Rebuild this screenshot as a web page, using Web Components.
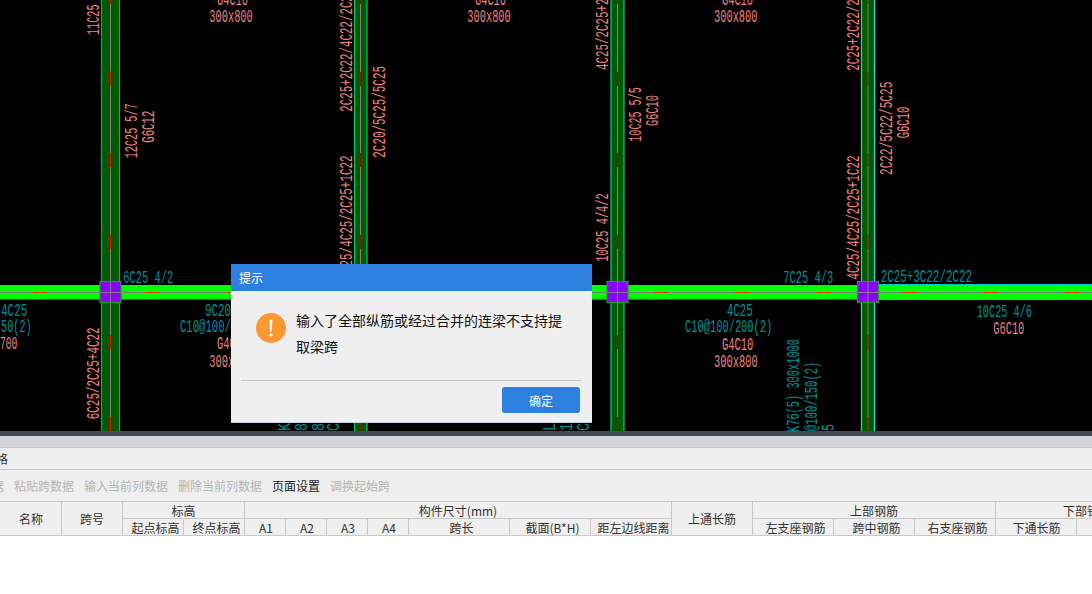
<!DOCTYPE html>
<html lang="zh">
<head>
<meta charset="utf-8">
<title>提示</title>
<style>
    html, body {
        margin: 0;
        height: 594px;
        overflow: hidden;
        background: #fff;
    }
    body {
        position: relative;
        display: flex;
        flex-direction: column;
        font-family: "Noto Sans CJK SC", "Liberation Sans", sans-serif;
        font-size: 12px;
        color: #333;
    }
</style>
</head>
<body>
<cad-canvas></cad-canvas>
<pane-sash></pane-sash>
<pane-head>格</pane-head>
<tool-strip>
    <tool-item class="clip" disabled>据</tool-item>
    <tool-item disabled>粘贴跨数据</tool-item>
    <tool-item disabled>输入当前列数据</tool-item>
    <tool-item disabled>删除当前列数据</tool-item>
    <tool-item>页面设置</tool-item>
    <tool-item disabled>调换起始跨</tool-item>
</tool-strip>
<span-table></span-table>
<hint-dialog heading="提示">
    <span slot="message">输入了全部纵筋或经过合并的连梁不支持提取梁跨</span>
    <span slot="action">确定</span>
</hint-dialog>

<script>
const RED = '#ee8080';
const TEAL = '#009096';

// text, x, y, length, colour, rotated. rotated labels: x is the baseline, y where the text starts
const LABELS = [
    ['G4C10', 217, 5, 31, RED],
    ['300x800', 209.3, 22, 43.5, RED],
    ['G4C10', 475, 5, 31, RED],
    ['300x800', 467.3, 22, 43.5, RED],
    ['G4C10', 722, 5, 31, RED],
    ['300x800', 714, 22, 43.5, RED],
    ['11C25 5/7', 99.3, 35, 55, RED, true],
    ['12C25 5/7', 136.7, 158.3, 55, RED, true],
    ['G6C12', 154, 142.7, 32, RED, true],
    ['2C25+2C22/4C22/2C22', 351.7, 111.7, 123, RED, true],
    ['4C25/4C25/2C25+1C22', 351.7, 279.5, 124, RED, true],
    ['2C20/5C25/5C25', 384.7, 157.7, 91.7, RED, true],
    ['4C25/2C25+2C25', 608.3, 70, 91, RED, true],
    ['10C25 4/4/2', 608, 261.7, 68.5, RED, true],
    ['10C25 5/5', 641.3, 141.7, 54.4, RED, true],
    ['G6C10', 658.3, 126, 31, RED, true],
    ['2C25+2C22/2C22', 858.7, 70.7, 91, RED, true],
    ['4C25/4C25/2C25+1C22', 858.7, 279.5, 124, RED, true],
    ['2C22/5C22/5C25', 892, 175, 93.3, RED, true],
    ['G6C10', 909, 138.3, 31.6, RED, true],
    ['6C25/2C25+4C22', 99.3, 419.3, 92, RED, true],
    ['6C25 4/2', 123.3, 282.7, 50, TEAL],
    ['4C25', 1, 316, 26.3, TEAL],
    ['50(2)', 1, 332.3, 30.7, TEAL],
    ['9C20', 205, 316, 26, TEAL],
    ['C10@100/', 180, 332.3, 51, TEAL],
    ['700', 0, 349.3, 17.3, RED],
    ['G4C10', 217, 349.3, 31, RED],
    ['300x800', 209.3, 366.7, 43.5, RED],
    ['4C25', 726.7, 316, 26, TEAL],
    ['C10@100/200(2)', 685, 332.3, 87.3, TEAL],
    ['G4C10', 722, 350, 31.3, RED],
    ['300x800', 714, 366.7, 43.7, RED],
    ['7C25 4/3', 783.3, 282.7, 50, TEAL],
    ['2C25+3C22/2C22', 880.7, 281.7, 91.3, TEAL],
    ['10C25 4/6', 976.7, 316.7, 55.3, TEAL],
    ['G6C10', 993.3, 334, 31, RED],
    ['K76(5) 300x1000', 799.3, 432, 93, TEAL, true],
    ['@100/150(2)', 816.7, 431, 69.3, TEAL, true],
    ['5', 834, 431, 7, TEAL, true],
    ['K', 290, 431, 8, TEAL, true],
    ['8', 307, 431, 8, TEAL, true],
    ['8', 324, 431, 8, TEAL, true],
    ['C', 339, 431, 8, TEAL, true],
    ['L', 555, 431, 8, TEAL, true],
    ['1', 572, 431, 8, TEAL, true],
    ['C', 589, 431, 8, TEAL, true]
];

const COLUMNS = [
    {left: 101.5, right: 119.5, mid: 110.5, edge: '#00a88c', dash: '#ff0000'},
    {left: 354.5, right: 367, mid: 360.5, edge: '#00c878', dash: '#8a1500'},
    {left: 611, right: 624, mid: 617.5, edge: '#14c4a4', dash: '#8a1500'},
    {left: 861.5, right: 874.5, mid: 868, edge: '#00e6e6', dash: '#6e2a00'}
];
const BEAM_DASHES = [33, 146, 228, 654, 735, 817, 903, 984, 1065];
const COLUMN_DASHES = [-10, 72, 153, 235, 335, 417];

class CadCanvas extends HTMLElement {
    connectedCallback() {
        const shadow = this.attachShadow({ mode: 'open' });
        let art = '';
        for (let i = 0; i < COLUMNS.length; i++) {
            const c = COLUMNS[i];
            art += `<rect x="${c.left}" y="0" width="${c.right - c.left}" height="431" fill="#005a00"/>`;
            art += `<path d="M${c.left} 0V431M${c.right} 0V431" stroke="${c.edge}" stroke-width="1.2"/>`;
            art += `<path d="M${c.mid} 0V431" stroke="#808080" stroke-width="1"/>`;
            for (let j = 0; j < COLUMN_DASHES.length; j++) {
                art += `<path d="M${c.mid} ${COLUMN_DASHES[j]}v14" stroke="${c.dash}" stroke-width="1.4"/>`;
            }
        }
        art += '<rect x="0" y="285" width="1092" height="14.5" fill="#00ff00"/>';
        art += '<path d="M0 298H880" stroke="#00d000" stroke-width="0.6"/>';
        art += '<path d="M879 284.5H1092M879 299.5H1092" stroke="#00c8c8" stroke-width="1"/>';
        art += '<path d="M0 292.5H1092" stroke="#808080" stroke-width="1"/>';
        for (let i = 0; i < BEAM_DASHES.length; i++) {
            art += `<path d="M${BEAM_DASHES[i]} 292.5h6.5m1 0h6.5" stroke="#ff2a00" stroke-width="1.2"/>`;
        }
        for (let i = 0; i < COLUMNS.length; i++) {
            const x = COLUMNS[i].mid;
            art += `<rect x="${x - 10.5}" y="281.5" width="21" height="21" fill="#8b00ff" stroke="#1f9f1f" stroke-width="1.2"/>`;
            art += `<path d="M${x} 281.5V302.5M${x - 10.5} 292.5H${x + 10.5}" stroke="#808080" stroke-width="1"/>`;
        }
        for (let i = 0; i < LABELS.length; i++) {
            const l = LABELS[i];
            const place = l[5] ? `transform="translate(${l[1]} ${l[2]}) rotate(-90)"` : `x="${l[1]}" y="${l[2]}"`;
            art += `<text ${place} fill="${l[4]}" textLength="${l[3]}" lengthAdjust="spacingAndGlyphs">${l[0]}</text>`;
        }
        shadow.innerHTML = `
        <style>
            :host { display: block; height: 431px; background: #000; overflow: hidden; }
            svg { display: block; }
            text { font-family: "Liberation Mono", monospace; font-size: 19px; white-space: pre; }
        </style>
        <svg width="1092" height="431" viewBox="0 0 1092 431">${art}</svg>`;
    }
}

class PaneSash extends HTMLElement {
    connectedCallback() {
        const shadow = this.attachShadow({ mode: 'open' });
        shadow.innerHTML = `
        <style>
            :host { display: block; height: 11px; border-top: 5px solid #454b54; background: #d3d4d8; }
        </style>`;
    }
}

class PaneHead extends HTMLElement {
    connectedCallback() {
        const shadow = this.attachShadow({ mode: 'open' });
        shadow.innerHTML = `
        <style>
            :host {
                display: flex;
                align-items: center;
                height: 21px;
                border-top: 1px solid #c8c8c8;
                border-bottom: 1px solid #c8c8c8;
                background: #efefef;
                overflow: hidden;
            }
            div { margin-left: -4px; }
        </style>
        <div><slot></slot></div>`;
    }
}

class ToolStrip extends HTMLElement {
    connectedCallback() {
        const shadow = this.attachShadow({ mode: 'open' });
        shadow.innerHTML = `
        <style>
            :host {
                display: flex;
                align-items: center;
                gap: 10px;
                height: 31px;
                background: #efefef;
                overflow: hidden;
            }
        </style>
        <slot></slot>`;
    }
}

class ToolItem extends HTMLElement {
    connectedCallback() {
        const shadow = this.attachShadow({ mode: 'open' });
        shadow.innerHTML = `
        <style>
            :host { display: block; white-space: nowrap; color: #222; }
            :host([disabled]) { color: #b4b4b4; }
            :host(.clip) { margin-left: -8px; }
        </style>
        <slot></slot>`;
    }
}

const WIDTHS = [61, 60, 60, 60, 40, 40, 40, 40, 100, 80, 80, 80, 80, 80, 80, 80, 101];
// text, first column, column span, first row, row span, left padding that nudges the text
const CELLS = [
    ['名称', 1, 1, 1, 2, 1],
    ['跨号', 2, 1, 1, 2, 0],
    ['标高', 3, 2, 1, 1, 0],
    ['构件尺寸(mm)', 5, 7, 1, 1, 0],
    ['上通长筋', 12, 1, 1, 2, 0],
    ['上部钢筋', 13, 3, 1, 1, 0],
    ['下部钢筋', 16, 2, 1, 1, 0],
    ['起点标高', 3, 1, 2, 1, 5],
    ['终点标高', 4, 1, 2, 1, 5],
    ['A1', 5, 1, 2, 1, 2],
    ['A2', 6, 1, 2, 1, 2],
    ['A3', 7, 1, 2, 1, 2],
    ['A4', 8, 1, 2, 1, 2],
    ['跨长', 9, 1, 2, 1, 5],
    ['截面(B*H)', 10, 1, 2, 1, 5],
    ['距左边线距离', 11, 1, 2, 1, 5],
    ['左支座钢筋', 13, 1, 2, 1, 5],
    ['跨中钢筋', 14, 1, 2, 1, 5],
    ['右支座钢筋', 15, 1, 2, 1, 5],
    ['下通长筋', 16, 1, 2, 1, 1],
    ['', 17, 1, 2, 1, 0]
];

class SpanTable extends HTMLElement {
    connectedCallback() {
        const shadow = this.attachShadow({ mode: 'open' });
        let cells = '';
        for (let i = 0; i < CELLS.length; i++) {
            const c = CELLS[i];
            cells += `<div style="grid-column:${c[1]} / span ${c[2]};grid-row:${c[3]} / span ${c[4]};padding-left:${c[5]}px">${c[0]}</div>`;
        }
        shadow.innerHTML = `
        <style>
            :host { display: block; height: 35px; overflow: hidden; }
            .grid {
                display: grid;
                grid-template-columns: ${WIDTHS.map(w => w + 'px').join(' ')};
                grid-template-rows: 16px 16px;
                gap: 1px;
                padding: 1px 0;
                width: max-content;
                background: #c8c8c8;
            }
            .grid div {
                display: flex;
                align-items: center;
                justify-content: center;
                background: #efefef;
                white-space: nowrap;
                color: #333;
            }
        </style>
        <div class="grid">${cells}</div>`;
    }
}

class AlertIcon extends HTMLElement {
    connectedCallback() {
        const shadow = this.attachShadow({ mode: 'open' });
        shadow.innerHTML = `
        <style>
            :host { display: block; width: 30px; height: 30px; flex: none; }
            svg { display: block; }
        </style>
        <svg width="30" height="30" viewBox="0 0 30 30">
            <circle cx="15" cy="15" r="15" fill="#fb9832"/>
            <path d="M13.6 6.5h2.8l-.5 12h-1.8z" fill="#fff"/>
            <circle cx="15" cy="22" r="1.6" fill="#fff"/>
        </svg>`;
    }
}

class HintDialog extends HTMLElement {
    connectedCallback() {
        const shadow = this.attachShadow({ mode: 'open' });
        shadow.innerHTML = `
        <style>
            :host {
                position: absolute;
                left: 231px;
                top: 264px;
                width: 361px;
                display: flex;
                flex-direction: column;
                background: #efefef;
                box-sizing: border-box;
                border-bottom: 1px solid #c9d1de;
            }
            header {
                height: 27px;
                padding-left: 8px;
                display: flex;
                align-items: center;
                background: #2d7fe0;
                color: #fff;
                font-size: 12px;
            }
            .body {
                display: flex;
                align-items: flex-start;
                gap: 10px;
                padding: 16px 25px 21px;
            }
            alert-icon { margin-top: 6px; }
            .message {
                font-size: 14px;
                line-height: 26px;
                color: #111;
                width: 270px;
            }
            .rule { height: 1px; margin: 0 10px; background: #c4c4c4; }
            footer {
                display: flex;
                justify-content: flex-end;
                padding: 6px 12px 9px;
            }
            button {
                width: 78px;
                height: 26px;
                padding: 0;
                border: 0;
                border-radius: 3px;
                background: #2d7fe0;
                color: #fff;
                font: inherit;
            }
        </style>
        <header>${this.getAttribute('heading') || ''}</header>
        <div class="body">
            <alert-icon></alert-icon>
            <div class="message"><slot name="message"></slot></div>
        </div>
        <div class="rule"></div>
        <footer><button><slot name="action"></slot></button></footer>`;
    }
}

customElements.define('cad-canvas', CadCanvas);
customElements.define('pane-sash', PaneSash);
customElements.define('pane-head', PaneHead);
customElements.define('tool-strip', ToolStrip);
customElements.define('tool-item', ToolItem);
customElements.define('span-table', SpanTable);
customElements.define('alert-icon', AlertIcon);
customElements.define('hint-dialog', HintDialog);
</script>
</body>
</html>
